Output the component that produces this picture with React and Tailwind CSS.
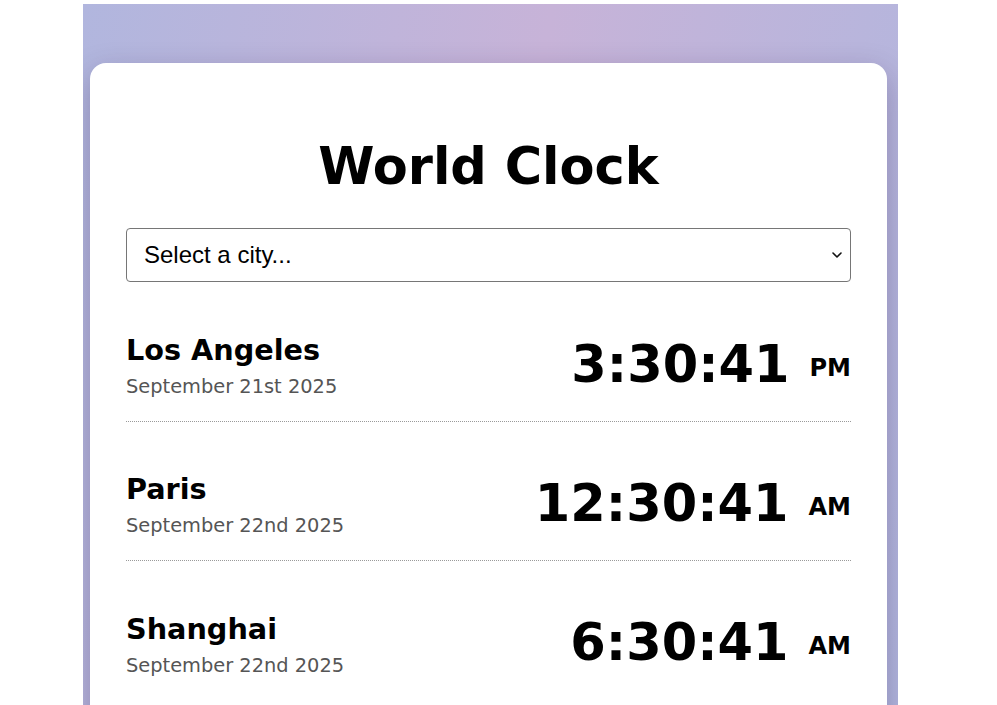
import React from "react";

const cities = [
  { name: "Los Angeles", date: "September 21st 2025", time: "3:30:41", ampm: "PM" },
  { name: "Paris", date: "September 22nd 2025", time: "12:30:41", ampm: "AM" },
  { name: "Shanghai", date: "September 22nd 2025", time: "6:30:41", ampm: "AM" },
];

export default function App() {
  return (
    <div className="min-h-[705px] bg-white pt-1 font-['DejaVu_Sans',Verdana,sans-serif] overflow-hidden">
      <div className="ml-[83px] w-[815px] h-[701px] bg-[linear-gradient(100deg,#b1b6de_0%,#c7b3d8_50%,#b1b6de_100%)] pt-[59px] pl-[7px] overflow-hidden">
        <div className="w-[797px] bg-white rounded-[16px] shadow-[0_10px_30px_rgba(40,20,70,0.28)] px-[36px] pt-[74px] pb-10">
          <h1 className="text-center text-[51px] leading-[60px] font-bold text-black mb-[31px]">
            World Clock
          </h1>
          <div className="relative mb-px">
            <select className="appearance-none w-full h-[54px] border border-[#767676] rounded-[4px] bg-white pl-[17px] pr-10 text-[24px] text-black font-['Liberation_Sans',Arial,sans-serif] outline-none">
              <option>Select a city...</option>
            </select>
            <svg
              className="absolute right-[9px] top-[24px] pointer-events-none"
              width="10"
              height="6"
              viewBox="0 0 10 6"
              fill="none"
            >
              <path d="M1 1l4 4 4-4" stroke="#111" strokeWidth="1.6" strokeLinecap="round" strokeLinejoin="round" />
            </svg>
          </div>
          <div>
            {cities.map((c, i) => (
              <div
                key={c.name}
                className={
                  "flex items-center justify-between h-[139px] pt-[25px] " +
                  (i < cities.length - 1 ? "border-b border-dotted border-[#9a9a9a]" : "")
                }
              >
                <div className="flex flex-col mt-[3px]">
                  <div className="text-[28.7px] leading-[32px] font-bold text-black">{c.name}</div>
                  <div className="mt-[10px] text-[19.4px] leading-[22px] text-[#555]">{c.date}</div>
                </div>
                <div className="text-right whitespace-nowrap">
                  <span className="text-[51px] leading-[60px] font-bold text-black">{c.time}</span>
                  <span className="ml-5 text-[24px] font-bold text-black align-[6px]">{c.ampm}</span>
                </div>
              </div>
            ))}
          </div>
        </div>
      </div>
    </div>
  );
}
